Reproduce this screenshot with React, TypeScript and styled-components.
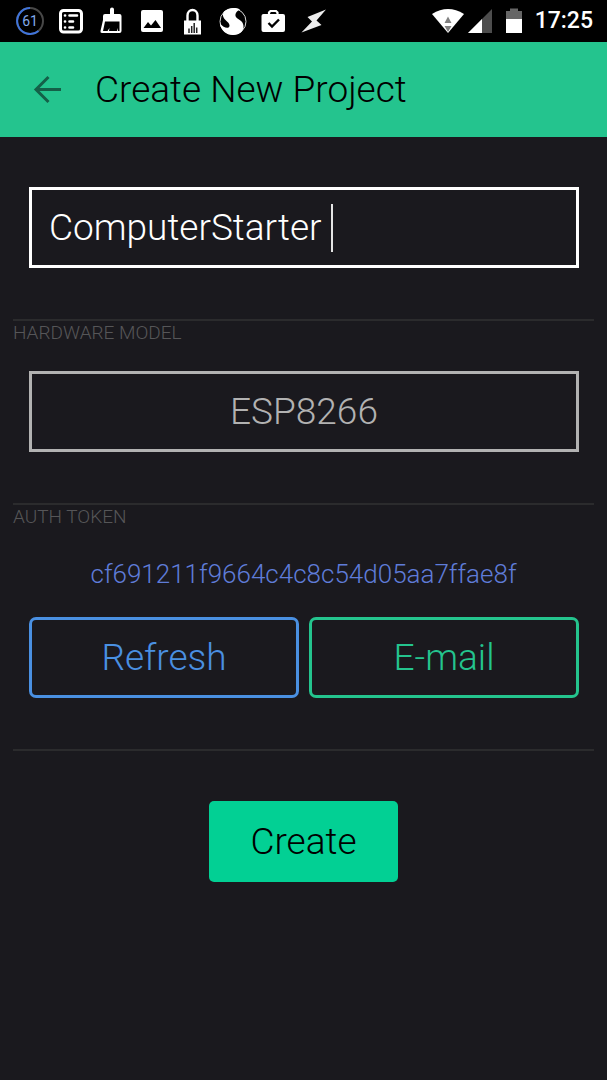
import React, { useState } from "react";
import styled, { createGlobalStyle } from "styled-components";

const GlobalStyle = createGlobalStyle`
  *, *::before, *::after { box-sizing: border-box; }
  body {
    margin: 0;
    background: #1a191e;
    font-family: Roboto, "Liberation Sans", sans-serif;
    font-weight: 300;
  }
`;

const Screen = styled.div`
  min-height: 100vh;
  display: flex;
  flex-direction: column;
`;

const StatusBar = styled.div`
  display: flex;
  align-items: center;
  justify-content: space-between;
  height: 42px;
  padding: 0 14px 0 16px;
  background: #000;
  color: #fff;
`;

const IconGroup = styled.div<{ $gap: number }>`
  display: flex;
  align-items: center;
  gap: ${(p) => p.$gap}px;
`;

const StatusIcon = styled.svg`
  display: block;
  height: 42px;
`;

const Clock = styled.time`
  margin-left: 5px;
  font-size: 23px;
  line-height: 42px;
  font-weight: 500;
`;

const Header = styled.header`
  display: flex;
  align-items: center;
  gap: 30px;
  height: 95px;
  padding: 0 30px;
  background: #24c48e;
  color: #000;
`;

const BackButton = styled.button`
  display: flex;
  padding: 0;
  border: 0;
  background: none;
  color: #146048;
`;

const Title = styled.h1`
  margin: 0;
  font-size: 37px;
  line-height: 48px;
  font-weight: 300;
`;

const Form = styled.form`
  display: flex;
  flex-direction: column;
  padding: 0 13px;
`;

const Section = styled.section<{ $divided?: boolean }>`
  display: flex;
  flex-direction: column;
  border-top: ${(p) => (p.$divided ? "2px solid #2b2b2d" : "0")};
`;

const Caption = styled.label`
  height: 24px;
  font-size: 19px;
  line-height: 24px;
  color: #565658;
`;

const TextField = styled.div`
  display: flex;
  align-items: center;
  height: 81px;
  margin: 50px 15px 51px 16px;
  padding: 0 17px;
  border: 3px solid #fff;
`;

const NameInput = styled.input`
  field-sizing: content;
  min-width: 0;
  padding: 0;
  border: 0;
  outline: 0;
  background: none;
  color: #fff;
  caret-color: transparent;
  font: inherit;
  font-size: 37px;
  line-height: 48px;
`;

const Caret = styled.span`
  width: 2px;
  height: 48px;
  background: #e4e4e4;
`;

const ModelSelect = styled.select`
  appearance: none;
  height: 81px;
  margin: 26px 15px 51px 16px;
  padding: 0;
  border: 3px solid #b2b2b2;
  border-radius: 0;
  background: none;
  color: #b2b2b2;
  font: inherit;
  font-size: 37px;
  text-align: center;
  text-align-last: center;
`;

const Token = styled.output`
  margin-top: 27px;
  font-size: 26px;
  line-height: 36px;
  text-align: center;
  color: #5f7cd8;
`;

const ButtonRow = styled.div`
  display: flex;
  gap: 10px;
  margin: 25px 15px 51px 16px;
`;

const OutlineButton = styled.button<{ $color: string }>`
  flex: 1;
  height: 81px;
  padding: 0;
  border: 3px solid ${(p) => p.$color};
  border-radius: 7px;
  background: none;
  color: ${(p) => p.$color};
  font: inherit;
  font-size: 37px;
`;

const CreateButton = styled.button`
  align-self: center;
  height: 81px;
  margin: 50px 0;
  padding: 0 41px;
  border: 0;
  border-radius: 5px;
  background: #02d094;
  color: #000;
  font: inherit;
  font-size: 37px;
`;

function NotificationIcons() {
  return (
    <IconGroup $gap={12}>
      <StatusIcon width="28" viewBox="0 0 28 42" fill="none">
        <circle cx="14" cy="21" r="13" stroke="#484848" strokeWidth="2" />
        <path d="M14 8A13 13 0 1 0 22.500 31" stroke="#3f74dc" strokeWidth="2" />
        <text x="14" y="26" textAnchor="middle" fontSize="14" fontWeight="400" fill="#82abed">61</text>
      </StatusIcon>
      <StatusIcon width="30" viewBox="0 0 30 42" fill="none" stroke="#fff">
        <rect x="4.500" y="10.500" width="21" height="21.500" rx="3" strokeWidth="3" />
        <path d="M13.500 15.500H21M13.500 21.500H17M13.500 27.500H17" strokeWidth="2.600" strokeLinecap="round" />
        <path d="M9 15.500H9.100M9 21.500H9.100M9 27.500H9.100" strokeWidth="2.600" strokeLinecap="round" />
      </StatusIcon>
      <StatusIcon width="28" viewBox="0 0 28 42">
        <path fill="#fff" d="M12 9.500a1.500 1.500 0 0 1 4 0V14H21.500q2 0 2 2V31q0 2-2 2H4Q2 33 2.500 31L5 20V16q0-2 2-2h5z" />
        <path fill="#000" d="M7 21.500H21.500V31H20L19 28V31H11L11.500 28L9.500 31H5L6.500 24z" />
      </StatusIcon>
      <StatusIcon width="28" viewBox="0 0 28 42">
        <rect x="3" y="10" width="22" height="22" rx="2" fill="#fff" />
        <path d="M5.500 28L10 22L13 25.500L17.500 20L23 28z" fill="#000" />
      </StatusIcon>
      <StatusIcon width="29" viewBox="0 0 29 42">
        <path d="M9.500 22V15.500a5 5.500 0 0 1 10 0V22" fill="none" stroke="#fff" strokeWidth="2.400" />
        <rect x="6" y="20.500" width="17" height="14" fill="#fff" />
        <path d="M11 33V28.500M13.700 33V26M16.200 33V23M18.700 33V27.500" stroke="#222" strokeWidth="1.500" />
      </StatusIcon>
      <StatusIcon width="28" viewBox="0 0 28 42">
        <circle cx="14" cy="21.500" r="13" fill="none" stroke="#ddd" strokeWidth="1" />
        <path
          fill="#fff"
          d="M21 9.500C16 7 9 8 5 11.500C3 15 4 18 7.500 21C10.500 23.500 11.500 26 9.500 27.500C7.500 28.500 4 27 0.800 23.500C2 30.500 7.500 35 14 35C21 35 24.500 31 24.500 26.500C24.500 22 21.500 20.500 18.500 18.500C15 16 16 12 21 9.500z"
        />
      </StatusIcon>
      <StatusIcon width="29" viewBox="0 0 29 42">
        <path d="M10 15V12.500L11.500 11H17L18.500 12.500V15" fill="none" stroke="#fff" strokeWidth="2.200" />
        <rect x="2.500" y="14" width="23.500" height="18" rx="2" fill="#fff" />
        <path d="M9.500 23L13 26.500L20 19.500" fill="none" stroke="#000" strokeWidth="2.400" />
      </StatusIcon>
      <StatusIcon width="28" viewBox="0 0 28 42">
        <path d="M26 9.500L7.500 17L12 21.500L1.500 32.500L21.500 25L16.500 20.500z" fill="#eee" />
      </StatusIcon>
    </IconGroup>
  );
}

function SystemIcons() {
  return (
    <IconGroup $gap={4}>
      <StatusIcon width="32" viewBox="0 0 32 42">
        <path d="M0 14Q16 4 32 14L16 33z" fill="#fff" />
        <path d="M12.500 23L16 16.500L19.500 23zM12.500 26H19.500L16 32z" fill="#808080" />
      </StatusIcon>
      <StatusIcon width="34" viewBox="0 0 34 42">
        <path d="M0 33L24 9V33z" fill="#4d4d4d" />
        <path d="M0 33L14 19V33z" fill="#fff" />
      </StatusIcon>
      <StatusIcon width="20" viewBox="0 0 20 42">
        <path d="M0 11H4V8.500H12V11H16V20H0z" fill="#666" />
        <path d="M0 19H16V33H0z" fill="#fff" />
      </StatusIcon>
      <Clock>17:25</Clock>
    </IconGroup>
  );
}

export default function App() {
  const [name, setName] = useState("ComputerStarter ");

  return (
    <Screen>
      <GlobalStyle />
      <StatusBar>
        <NotificationIcons />
        <SystemIcons />
      </StatusBar>
      <Header>
        <BackButton type="button" aria-label="Back">
          <svg width="35" height="35" viewBox="0 0 35 35" fill="none" stroke="currentColor" strokeWidth="3">
            <path d="M31 17.500H6M18.500 5L6 17.500L18.500 30" />
          </svg>
        </BackButton>
        <Title>Create New Project</Title>
      </Header>
      <Form onSubmit={(e) => e.preventDefault()}>
        <Section>
          <TextField>
            <NameInput aria-label="Project name" value={name} onChange={(e) => setName(e.target.value)} />
            <Caret />
          </TextField>
        </Section>
        <Section $divided>
          <Caption htmlFor="model">HARDWARE MODEL</Caption>
          <ModelSelect id="model" defaultValue="ESP8266">
            <option>ESP8266</option>
          </ModelSelect>
        </Section>
        <Section $divided>
          <Caption htmlFor="token">AUTH TOKEN</Caption>
          <Token id="token">cf691211f9664c4c8c54d05aa7ffae8f</Token>
          <ButtonRow>
            <OutlineButton type="button" $color="#4a90e2">Refresh</OutlineButton>
            <OutlineButton type="button" $color="#24c48e">E-mail</OutlineButton>
          </ButtonRow>
        </Section>
        <Section $divided>
          <CreateButton type="submit">Create</CreateButton>
        </Section>
      </Form>
    </Screen>
  );
}
